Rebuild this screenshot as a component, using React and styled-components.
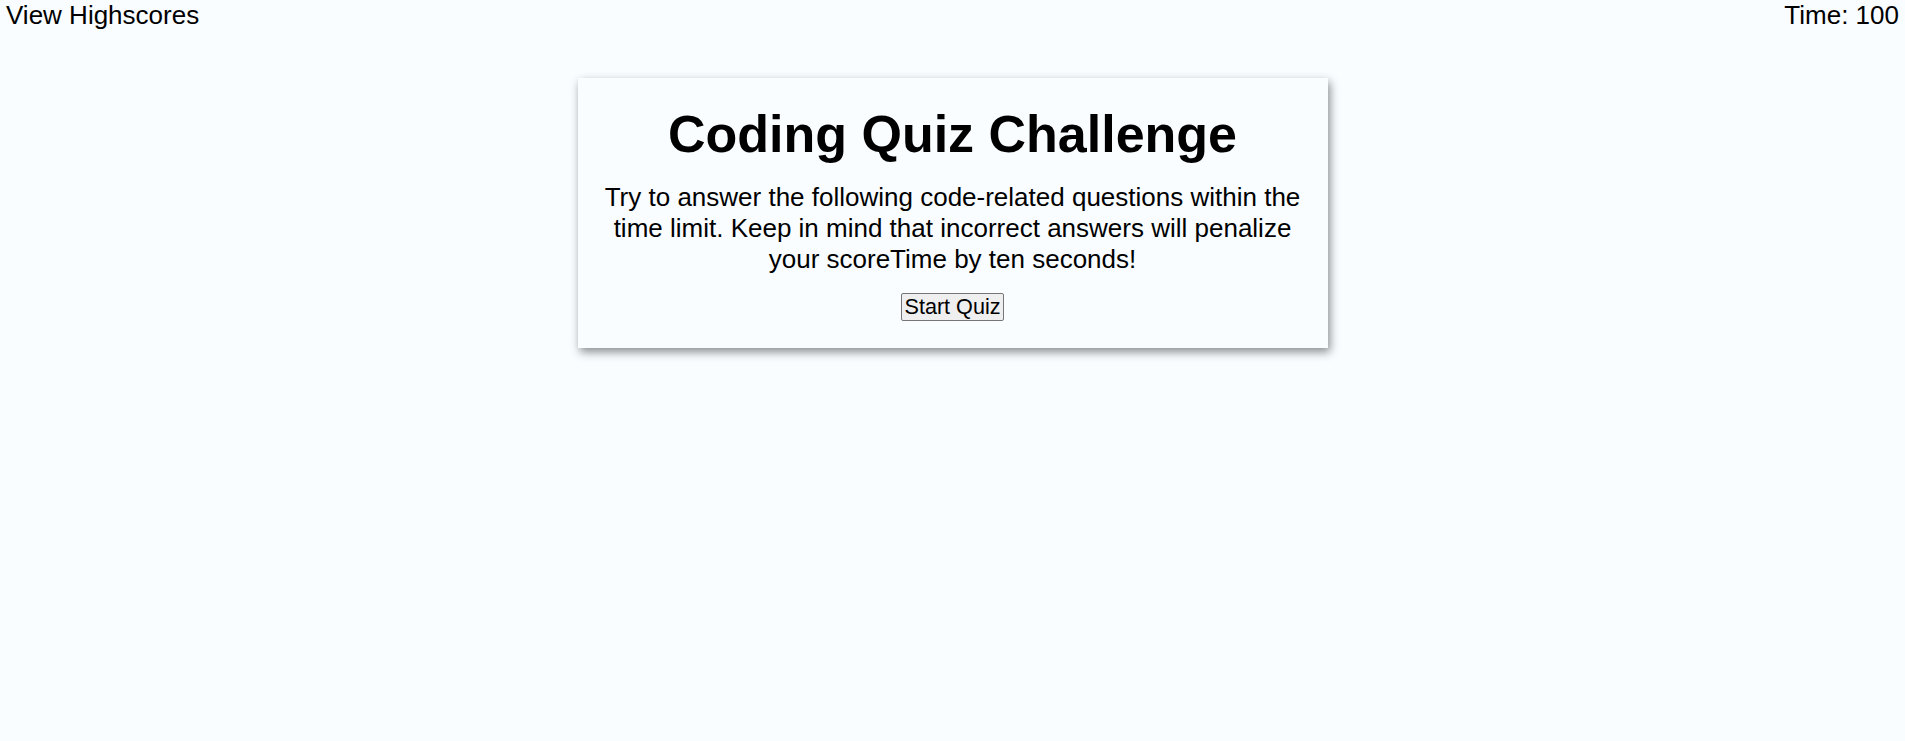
import React, { useState } from 'react';
import styled, { createGlobalStyle } from 'styled-components';

const GlobalStyle = createGlobalStyle`
    html, body, #root {
        min-height: 100%;
        height: 100%;
    }
    body {
        margin: 0;
        background: #f9fdff;
        font-family: "Liberation Sans", Arial, sans-serif;
        font-size: 26px;
        color: #000000;
    }
`

export default function App() {

    const [time] = useState(100);

    return (
        <Page>
            <GlobalStyle />
            <Header>
                <HighscoresLink>View Highscores</HighscoresLink>
                <Timer>Time: {time}</Timer>
            </Header>
            <Main>
                <Card>
                    <Title>Coding Quiz Challenge</Title>
                    <Intro>
                        Try to answer the following code-related questions within the time limit. Keep in mind that incorrect answers will penalize your scoreTime by ten seconds!
                    </Intro>
                    <StartButton>Start Quiz</StartButton>
                </Card>
            </Main>
        </Page>
    )
}

const Page = styled.div`
    min-height: 100vh;
    display: flex;
    flex-direction: column;
`
const Header = styled.header`
    display: flex;
    justify-content: space-between;
    align-items: flex-start;
    padding: 0 6px;
`
const HighscoresLink = styled.span`
    cursor: pointer;
`
const Timer = styled.span``

const Main = styled.main`
    display: flex;
    justify-content: center;
    align-items: flex-start;
    padding-top: 47px;
    flex: 1;
`
const Card = styled.section`
    width: 750px;
    box-sizing: border-box;
    padding: 26px 20px 27px;
    display: flex;
    flex-direction: column;
    align-items: center;
    text-align: center;
    background: #f9fdff;
    box-shadow: 2px 4px 9px rgba(0, 0, 0, 0.45);
`
const Title = styled.h1`
    font-size: 52px;
    font-weight: 700;
    margin: 0 0 18px;
`
const Intro = styled.p`
    margin: 0 0 18px;
    padding: 0 4px;
`
const StartButton = styled.button`
    font-family: "Liberation Sans", Arial, sans-serif;
    font-size: 21.6px;
    color: #000000;
    background: #efefef;
    border: 1px solid #767676;
    border-radius: 2px;
    padding: 0 2px;
    height: 28px;
    line-height: 26px;
    cursor: pointer;
`
